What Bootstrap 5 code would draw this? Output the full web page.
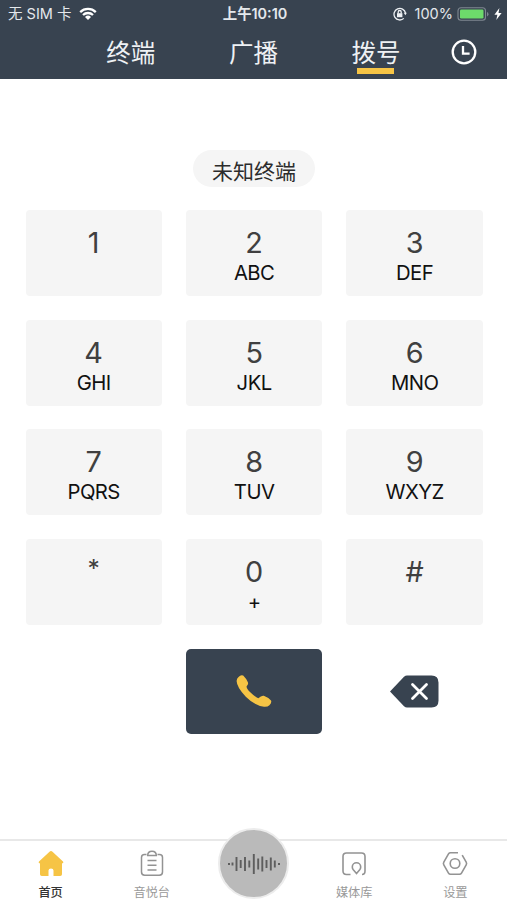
<!DOCTYPE html>
<html lang="zh-CN">
<head>
<meta charset="utf-8">
<meta name="viewport" content="width=device-width, initial-scale=1">
<title>拨号</title>
<link href="https://cdn.jsdelivr.net/npm/bootstrap@5.3.0/dist/css/bootstrap.min.css" rel="stylesheet">
<style>
  body { font-family: Inter, "Noto Sans CJK SC", sans-serif; height: 900px; overflow: hidden; background: #fff; }
  svg { display: block; flex: none; }
  .top-area { background: #384350; height: 79px; color: #fff; }
  .status { height: 28px; font-size: 14.5px; line-height: 28px; padding: 0 5px 0 8px; display: grid; grid-template-columns: 1fr auto 1fr; color: #e4e8ec; }
  .status-time { font-weight: 600; font-size: 14.4px; }
  .tabs { height: 51px; padding-left: 69.5px; }
  .tab { width: 122.6px; font-size: 24.5px; line-height: 50px; color: #eef1f4; text-decoration: none; height: 51px; }
  .tab-bar { width: 37px; height: 6px; background: #f6c445; margin-top: -10px; }
  .history { margin-left: 13.5px; margin-top: 11px; width: 26px; }
  .dialer { padding: 71px 24.5px 0 25.5px; }
  .target { width: 122px; height: 37px; border-radius: 19px; background: #f5f5f5; font-size: 21px; line-height: 43px; color: #2c2c2c; margin-bottom: 23.3px; }
  .keys { display: grid; grid-template-columns: repeat(3, 136.3px); grid-auto-rows: 85.7px; gap: 23.9px 24.2px; }
  .key { border: 0; border-radius: 4px; background: #f5f5f5; padding: 14px 0 0; }
  .key-num { font-size: 28.8px; line-height: 38px; color: #404040; }
  .key-star { font-size: 24.5px; line-height: 31px; }
  .key-sub { font-size: 20.3px; line-height: 22px; color: #111; letter-spacing: -.55px; }
  .key-call { background: #384350; padding: 0; border-radius: 5px; }
  .bottom-nav { height: 61px; border-top: 2px solid #e8e8e8; background: #fff; padding-top: 9px; }
  .nav-cell { width: 101.2px; font-size: 12.2px; line-height: 16px; color: #999; text-decoration: none; }
  .nav-cell span { margin-top: 7.5px; }
  .nav-cell.current { color: #333; font-weight: 500; }
  .voice { width: 71px; height: 71px; border-radius: 50%; background: #bababa; border: 2px solid #ececec; margin: -22px -2px 0 0; }
</style>
</head>
<body class="d-flex flex-column">
<header class="top-area">
  <div class="status">
    <div class="d-flex align-items-center">
      <span>无 SIM 卡</span>
      <svg class="ms-2" width="18" height="14" viewBox="0 0 18 14" fill="none" stroke="#fff" stroke-width="2.3"><path d="M1.2 5.1a11.2 11.2 0 0 1 15.6 0M4 8a7.3 7.3 0 0 1 10 0"/><path d="M9 13l-3-3a4.3 4.3 0 0 1 6 0z" fill="#fff" stroke="none"/></svg>
    </div>
    <div class="status-time">上午10:10</div>
    <div class="d-flex align-items-center justify-content-end">
      <svg width="14" height="14" viewBox="0 0 14 14" fill="none" stroke="#eef1f4" stroke-width="1.3"><path d="M10.8 11.4A5.8 5.8 0 1 1 12.5 6"/><path d="M10.8 5.8h3l-1.4 2.4z" fill="#eef1f4" stroke="none"/><rect x="4" y="6.2" width="5.4" height="4" fill="#eef1f4" stroke="none"/><path d="M5.2 6.5V5a1.5 1.5 0 0 1 3 0v1.5"/></svg>
      <span class="ms-2">100%</span>
      <svg class="ms-1" width="33" height="14" viewBox="0 0 33 14"><rect x="1" y=".7" width="27.5" height="12.6" rx="3" fill="none" stroke="#7f8891" stroke-width="1.1"/><rect x="3" y="2.5" width="23.5" height="9" rx="1.3" fill="#6ddb6b"/><path d="M30 5v4.4q1.5-.6 1.5-2.2T30 5z" fill="#7f8891"/></svg>
      <svg class="ms-1" width="8" height="12" viewBox="0 0 8 12" fill="#fff"><path d="M5.4 0L.4 6.8h3L2.3 12 7.6 5H4.5z"/></svg>
    </div>
  </div>
  <nav class="tabs d-flex">
    <a class="tab text-center" href="#">终端</a>
    <a class="tab text-center" href="#">广播</a>
    <a class="tab text-center" href="#">拨号<div class="tab-bar mx-auto"></div></a>
    <a class="history" href="#" aria-label="通话记录"><svg width="26" height="26" viewBox="0 0 26 26" fill="none" stroke="#fff" stroke-width="2.3"><circle cx="13" cy="13" r="11.3"/><path d="M12 7v7.6h6.6"/></svg></a>
  </nav>
</header>

<main class="dialer flex-grow-1">
  <div class="target mx-auto text-center">未知终端</div>
  <div class="keys">
    <button class="key d-flex flex-column align-items-center"><span class="key-num">1</span></button>
    <button class="key d-flex flex-column align-items-center"><span class="key-num">2</span><span class="key-sub">ABC</span></button>
    <button class="key d-flex flex-column align-items-center"><span class="key-num">3</span><span class="key-sub">DEF</span></button>
    <button class="key d-flex flex-column align-items-center"><span class="key-num">4</span><span class="key-sub">GHI</span></button>
    <button class="key d-flex flex-column align-items-center"><span class="key-num">5</span><span class="key-sub">JKL</span></button>
    <button class="key d-flex flex-column align-items-center"><span class="key-num">6</span><span class="key-sub">MNO</span></button>
    <button class="key d-flex flex-column align-items-center"><span class="key-num">7</span><span class="key-sub">PQRS</span></button>
    <button class="key d-flex flex-column align-items-center"><span class="key-num">8</span><span class="key-sub">TUV</span></button>
    <button class="key d-flex flex-column align-items-center"><span class="key-num">9</span><span class="key-sub">WXYZ</span></button>
    <button class="key d-flex flex-column align-items-center"><span class="key-num key-star">*</span></button>
    <button class="key d-flex flex-column align-items-center"><span class="key-num">0</span><span class="key-sub">+</span></button>
    <button class="key d-flex flex-column align-items-center"><span class="key-num">#</span></button>
    <div></div>
    <button class="key key-call d-flex align-items-center justify-content-center" aria-label="呼叫">
      <svg width="36" height="34" viewBox="0 0 36 34" fill="#f6c445"><path d="M2.3 3.2Q5 .2 7.2 1.6Q10.6 5 12 8.4Q12.6 10 10.6 12.2Q10.4 14.4 14 18Q19.5 23.4 22.3 24.2Q25.500 21.200 27.800 21.800Q32.500 23.500 35 26.600Q36 28.500 33.400 31.200Q31.600 33 28 32.700Q18.500 31.600 9.800 22.800Q.8 13.200.6 7Q.8 4.400 2.300 3.200z"/></svg>
    </button>
    <div class="d-flex align-items-center justify-content-center">
      <svg width="49" height="33" viewBox="0 0 49 33"><path d="M0 16.500L14 1.700Q15.500.5 17 .5h24.500q7 0 7 7v18q0 7-7 7H17q-1.500 0-3-1.200z" fill="#384350"/><path d="M22.500 9.500l14 14m0-14l-14 14" stroke="#fff" stroke-width="2.800" stroke-linecap="round"/></svg>
    </div>
  </div>
</main>

<nav class="bottom-nav d-flex">
  <a class="nav-cell current d-flex flex-column align-items-center" href="#">
    <svg width="26" height="27" viewBox="0 0 26 27" fill="#f6c445"><path d="M13 1Q13.800 1 14.500 1.700L25 11.500Q26 13.300 24 13.300V24.200Q24 26 22.200 26H15.500V20.500Q15.500 18.500 13 18.500T10.500 20.500V26H3.800Q2 26 2 24.200V13.300Q0 13.300 1 11.500L11.500 1.700Q12.200 1 13 1z"/></svg>
    <span>首页</span>
  </a>
  <a class="nav-cell d-flex flex-column align-items-center" href="#">
    <svg width="24" height="27" viewBox="0 0 24 27" fill="none" stroke="#939393" stroke-width="1.500"><path d="M6.500 4.500H4.500Q1.500 4.500 1.500 7.500V22Q1.500 25.200 4.700 25.200H19.300Q22.500 25.200 22.500 22V7.500Q22.500 4.500 19.500 4.500H17.500"/><path d="M7.700 5.500Q7.700 1.200 12 1.200T16.300 5.500z"/><path d="M7.500 10.500h9M7.500 15.300h9M7.500 20h9"/></svg>
    <span>音悦台</span>
  </a>
  <a class="nav-cell d-flex justify-content-center" href="#" aria-label="语音">
    <div class="voice d-flex align-items-center justify-content-center">
      <svg width="54" height="24" viewBox="0 0 54 24" stroke="#5e5e5e" stroke-width="1.900"><path d="M1 12h2M5.500 10.500v3M9.500 5v14M13.700 8v8M18 5v14M22.300 8.500v7M26.800 2v20M31.200 6.500v11M35.300 4.500v15M39.500 8v8M43.800 5.500v13M47.800 8.500v7M51 12h2"/></svg>
    </div>
  </a>
  <a class="nav-cell d-flex flex-column align-items-center" href="#">
    <svg width="24" height="27" viewBox="0 0 24 27" fill="none" stroke="#939393" stroke-width="1.600"><path d="M8.500 24.500H4.500Q1 24.500 1 21V6.500Q1 3 4.500 3H19.500Q23 3 23 6.500V21Q23 24.500 20 24.500"/><path d="M14.500 23.500L11.300 19.800Q10.300 18.500 10.300 17a4.200 4.200 0 0 1 8.400 0Q18.700 18.500 17.700 19.800z"/></svg>
    <span>媒体库</span>
  </a>
  <a class="nav-cell d-flex flex-column align-items-center" href="#">
    <svg width="26" height="27" viewBox="0 0 26 27" fill="none" stroke="#939393" stroke-width="1.600"><path d="M16 2.800H8.500Q7.200 2.800 6.500 3.900L1.800 12.100Q1 13.500 1.800 14.900L6.500 23.100Q7.200 24.300 8.500 24.300H17.500Q18.800 24.300 19.500 23.100L24.200 14.900Q25 13.500 24.200 12.100L20.200 5.100"/><circle cx="13" cy="13.500" r="4.800"/></svg>
    <span>设置</span>
  </a>
</nav>
<script src="https://cdn.jsdelivr.net/npm/bootstrap@5.3.0/dist/js/bootstrap.bundle.min.js"></script>
</body>
</html>
